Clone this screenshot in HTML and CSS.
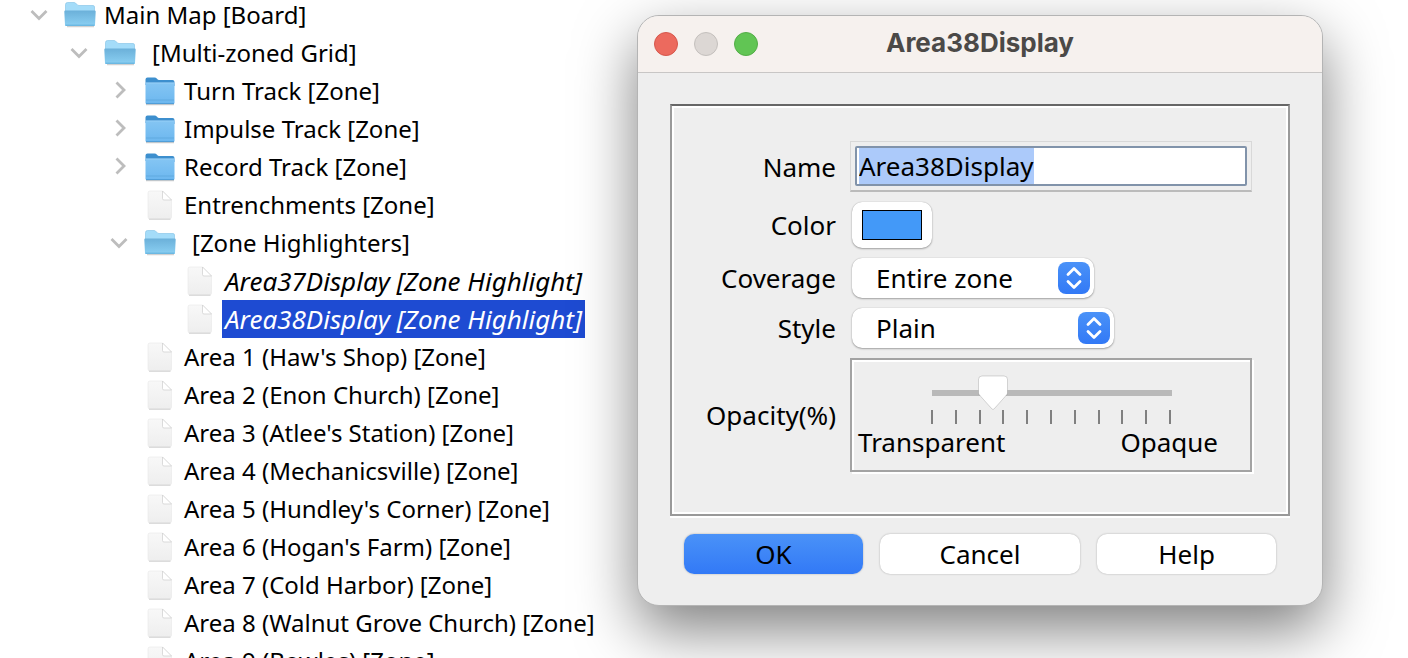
FILE: index.html
```
<!DOCTYPE html>
<html lang="en">
<head>
    <meta charset="UTF-8">
    <meta name="viewport" content="width=device-width, initial-scale=1.0">
    <title>Area38Display</title>
    <link rel="stylesheet" href="styles.css">
</head>
<body>
    <!-- Shared icons -->
    <svg class="sprite" aria-hidden="true">
        <defs>
            <linearGradient id="openFront" x1="0" y1="0" x2="0" y2="1">
                <stop offset="0" stop-color="#6bb0d9"/>
                <stop offset="1" stop-color="#8bd0f3"/>
            </linearGradient>
            <linearGradient id="closedFront" x1="0" y1="0" x2="0" y2="1">
                <stop offset="0" stop-color="#84c5f3"/>
                <stop offset="1" stop-color="#6cb7ef"/>
            </linearGradient>
            <linearGradient id="paper" x1="0" y1="0" x2="0" y2="1">
                <stop offset="0" stop-color="#f8f8f8"/>
                <stop offset="1" stop-color="#eeeeee"/>
            </linearGradient>
        </defs>
        <symbol id="folder-open" viewBox="0 0 32 32">
            <path d="M3 27.500h27" stroke="#000" stroke-opacity=".18" stroke-width="1.5"/>
            <path d="M1.500 24V5.500q0-2 2-2h6.500q1.500 0 2.500 1.500T15 6.500h14q1.500 0 1.500 1.500V24z" fill="#a4dcf9" stroke="#7fc0e4" stroke-width=".6"/>
            <path d="M.3 12.500q0-1 1-1h29.400q1 0 1 1L31 26q0 1-1 1H2q-1 0-1-1z" fill="url(#openFront)"/>
            <path d="M1.500 26.200h29" stroke="#5eaedb" stroke-width="1"/>
        </symbol>
        <symbol id="folder-closed" viewBox="0 0 32 32">
            <path d="M2 29.500h28" stroke="#000" stroke-opacity=".2" stroke-width="1.500"/>
            <path d="M1.500 10V4.500q0-2 2-2h7q1.500 0 2.500 1.200T15 5h13.500q2 0 2 2v4z" fill="#3d8fce"/>
            <path d="M1.500 9q0-1 1-1h27q1 0 1 1v18.500q0 1.500-1.500 1.500H3q-1.500 0-1.500-1.500z" fill="url(#closedFront)"/>
            <path d="M1.500 7.800h29" stroke="#b3e0ff" stroke-width=".7"/>
            <path d="M2 25h28" stroke="#5aa3da" stroke-width=".7"/>
            <path d="M2 28.600h28" stroke="#4c97d2" stroke-width=".9"/>
        </symbol>
        <symbol id="document" viewBox="0 0 32 32">
            <path d="M4 4q0-2 2-2h12.500l9 9V28q0 2-2 2H6q-2 0-2-2z" fill="url(#paper)" stroke="#e8e8e8" stroke-width=".6"/>
            <path d="M5 30.200h21.500" stroke="#cfcfcf" stroke-width="1"/>
            <path d="M18.500 2v7.500q0 1.500 1.500 1.500h7.500z" fill="#fff" stroke="#cdcdcd" stroke-width=".7"/>
        </symbol>
        <symbol id="chevron-down" viewBox="0 0 30 30">
            <path d="M7.500 11l7.500 7.500 7.500-7.500" fill="none" stroke="#bdbdbd" stroke-width="2.800"/>
        </symbol>
        <symbol id="chevron-right" viewBox="0 0 30 30">
            <path d="M12.500 6.500l7.500 7.500-7.500 7.500" fill="none" stroke="#bdbdbd" stroke-width="2.800"/>
        </symbol>
        <symbol id="up-down" viewBox="0 0 32 32">
            <path d="M10 12.500l6-6 6 6M10 19.500l6 6 6-6" fill="none" stroke="#fff" stroke-width="2.800" stroke-linecap="round" stroke-linejoin="round"/>
        </symbol>
    </svg>

    <main class="desktop">
        <ul class="tree">
            <li>
                <div class="row root"><button class="toggle" aria-label="Collapse"><svg><use href="#chevron-down"/></svg></button><svg class="icon"><use href="#folder-open"/></svg><span class="name">Main Map [Board]</span></div>
                <ul>
                    <li>
                        <div class="row"><button class="toggle" aria-label="Collapse"><svg><use href="#chevron-down"/></svg></button><svg class="icon"><use href="#folder-open"/></svg><span class="name unnamed">[Multi-zoned Grid]</span></div>
                        <ul>
                            <li><div class="row"><button class="toggle" aria-label="Expand"><svg><use href="#chevron-right"/></svg></button><svg class="icon"><use href="#folder-closed"/></svg><span class="name">Turn Track [Zone]</span></div></li>
                            <li><div class="row"><button class="toggle" aria-label="Expand"><svg><use href="#chevron-right"/></svg></button><svg class="icon"><use href="#folder-closed"/></svg><span class="name">Impulse Track [Zone]</span></div></li>
                            <li><div class="row"><button class="toggle" aria-label="Expand"><svg><use href="#chevron-right"/></svg></button><svg class="icon"><use href="#folder-closed"/></svg><span class="name">Record Track [Zone]</span></div></li>
                            <li><div class="row leaf"><svg class="icon"><use href="#document"/></svg><span class="name">Entrenchments [Zone]</span></div></li>
                            <li>
                                <div class="row"><button class="toggle" aria-label="Collapse"><svg><use href="#chevron-down"/></svg></button><svg class="icon"><use href="#folder-open"/></svg><span class="name unnamed">[Zone Highlighters]</span></div>
                                <ul>
                                    <li><div class="row leaf"><svg class="icon"><use href="#document"/></svg><span class="name highlight">Area37Display [Zone Highlight]</span></div></li>
                                    <li><div class="row leaf"><svg class="icon"><use href="#document"/></svg><span class="name highlight selected">Area38Display [Zone Highlight]</span></div></li>
                                </ul>
                            </li>
                            <li><div class="row leaf"><svg class="icon"><use href="#document"/></svg><span class="name">Area 1 (Haw's Shop) [Zone]</span></div></li>
                            <li><div class="row leaf"><svg class="icon"><use href="#document"/></svg><span class="name">Area 2 (Enon Church) [Zone]</span></div></li>
                            <li><div class="row leaf"><svg class="icon"><use href="#document"/></svg><span class="name">Area 3 (Atlee's Station) [Zone]</span></div></li>
                            <li><div class="row leaf"><svg class="icon"><use href="#document"/></svg><span class="name">Area 4 (Mechanicsville) [Zone]</span></div></li>
                            <li><div class="row leaf"><svg class="icon"><use href="#document"/></svg><span class="name">Area 5 (Hundley's Corner) [Zone]</span></div></li>
                            <li><div class="row leaf"><svg class="icon"><use href="#document"/></svg><span class="name">Area 6 (Hogan's Farm) [Zone]</span></div></li>
                            <li><div class="row leaf"><svg class="icon"><use href="#document"/></svg><span class="name">Area 7 (Cold Harbor) [Zone]</span></div></li>
                            <li><div class="row leaf"><svg class="icon"><use href="#document"/></svg><span class="name">Area 8 (Walnut Grove Church) [Zone]</span></div></li>
                            <li><div class="row leaf"><svg class="icon"><use href="#document"/></svg><span class="name">Area 9 (Bowles) [Zone]</span></div></li>
                        </ul>
                    </li>
                </ul>
            </li>
        </ul>

        <section class="dialog" role="dialog" aria-labelledby="dialogTitle">
            <header class="titlebar">
                <div class="lights">
                    <button class="light close" aria-label="Close"></button>
                    <button class="light minimize" aria-label="Minimize" disabled></button>
                    <button class="light zoom" aria-label="Zoom"></button>
                </div>
                <h1 id="dialogTitle">Area38Display</h1>
            </header>

            <form class="content">
                <div class="panel">
                    <label for="name">Name</label>
                    <div class="text-frame">
                        <input type="text" id="name" value="Area38Display">
                    </div>

                    <label for="color">Color</label>
                    <button type="button" class="color-button" id="color"><span class="swatch"></span></button>

                    <label for="coverage">Coverage</label>
                    <div class="combo">
                        <select id="coverage">
                            <option>Entire zone</option>
                        </select>
                        <svg><use href="#up-down"/></svg>
                    </div>

                    <label for="style">Style</label>
                    <div class="combo wide">
                        <select id="style">
                            <option>Plain</option>
                        </select>
                        <svg><use href="#up-down"/></svg>
                    </div>

                    <label for="opacity">Opacity(%)</label>
                    <div class="slider">
                        <input type="range" id="opacity" min="0" max="100" value="22">
                        <div class="ticks"><i></i><i></i><i></i><i></i><i></i><i></i><i></i><i></i><i></i><i></i><i></i></div>
                        <div class="legend"><span>Transparent</span><span>Opaque</span></div>
                    </div>
                </div>

                <div class="actions">
                    <button type="button" class="button primary">OK</button>
                    <button type="button" class="button cancel">Cancel</button>
                    <button type="button" class="button">Help</button>
                </div>
            </form>
        </section>
    </main>

    <script>
        // Select the whole name when the dialog opens
        document.getElementById('name').select();
    </script>
</body>
</html>
```
FILE: styles.css
```
* {
    margin: 0;
    padding: 0;
    box-sizing: border-box;
}

body {
    background: #fff;
    color: #000;
    font-family: 'Noto Sans', 'Open Sans', sans-serif;
    font-size: 24px;
    overflow: hidden;
}

button,
input,
select {
    font: inherit;
    color: inherit;
    border: none;
    outline: none;
}

.sprite {
    position: absolute;
    width: 0;
    height: 0;
}

.desktop {
    display: flex;
    align-items: flex-start;
    height: 100vh;
    overflow: hidden;
}

/* Tree */
.tree {
    flex: 0 0 637px;
    padding-left: 24px;
}

.tree ul {
    padding-left: 40px;
}

.tree li {
    list-style: none;
}

.row {
    display: flex;
    align-items: center;
    height: 38px;
    white-space: nowrap;
}

.root {
    height: 30px;
    margin-bottom: 4px;
}

.toggle {
    width: 30px;
    height: 30px;
    margin-right: 10px;
    background: none;
}

.toggle svg {
    display: block;
    width: 30px;
    height: 30px;
}

.leaf {
    padding-left: 40px;
}

.icon {
    flex: none;
    width: 32px;
    height: 32px;
    margin-right: 6px;
}

.name {
    padding: 0 2px;
    line-height: 38px;
}

.root .name {
    line-height: 30px;
}

.unnamed {
    padding-left: 10px;
}

.highlight {
    padding: 0 3px;
    font-size: 26px;
    font-style: italic;
}

.selected {
    background: #1e4bd2;
    color: #fff;
}

/* Dialog */
.dialog {
    position: relative;
    flex: 1;
    margin: 15px 85px 0 0;
    background: #eee;
    border: 1px solid #b4b4b4;
    border-radius: 22px;
    box-shadow: 0 24px 60px rgba(0, 0, 0, 0.5);
}

.titlebar {
    display: grid;
    grid-template-columns: 1fr auto 1fr;
    align-items: center;
    height: 57px;
    padding: 0 16px;
    background: #f6f1ee;
    border-bottom: 1px solid #c8c6c5;
    border-radius: 21px 21px 0 0;
}

.titlebar h1 {
    padding-bottom: 2px;
    font-family: Inter, sans-serif;
    font-size: 26px;
    font-weight: 700;
    line-height: 32px;
    color: #4b4947;
}

.lights {
    display: flex;
    gap: 16px;
}

.light {
    width: 24px;
    height: 24px;
    border: 1px solid #d6574c;
    border-radius: 50%;
    background: #ec6a5e;
}

.minimize {
    background: #dcd7d4;
    border-color: #c4c0bd;
}

.zoom {
    background: #61c554;
    border-color: #53ad47;
}

.content {
    padding: 31px 32px;
    font-size: 26px;
    line-height: 36px;
}

.panel {
    display: grid;
    grid-template-columns: 164px 1fr;
    column-gap: 14px;
    row-gap: 10px;
    align-items: center;
    padding: 35px 36px 42px 0;
    border: 2px solid #999;
    border-top-color: #666;
    box-shadow: inset 0 0 0 2px #fff, 0 2px 0 #fff;
}

.panel label {
    text-align: right;
}

.text-frame {
    padding: 4px;
    border: 1px solid #d8d8d8;
    border-bottom: 2px solid #bbb;
}

.text-frame input {
    display: block;
    width: 100%;
    height: 40px;
    padding: 0 2px;
    background: #fff;
    border: 2px solid #8193aa;
    border-radius: 2px;
}

.text-frame input::selection {
    background: #accafa;
    color: #000;
}

.color-button {
    justify-self: start;
    display: flex;
    align-items: center;
    justify-content: center;
    width: 80px;
    height: 46px;
    margin-left: 2px;
    background: #fff;
    border-radius: 10px;
    box-shadow: 0 0 1px rgba(0, 0, 0, 0.3), 0 1px 2px rgba(0, 0, 0, 0.3);
}

.swatch {
    width: 60px;
    height: 30px;
    background: #4399f8;
    border: 1px solid #000;
}

.combo {
    display: grid;
    grid-template-columns: 1fr 32px;
    align-items: center;
    width: 242px;
    margin-left: 2px;
}

.combo.wide {
    width: 262px;
}

.combo select {
    grid-area: 1 / 1 / 2 / 3;
    height: 40px;
    padding: 0 48px 0 24px;
    appearance: none;
    background: #fff;
    border-radius: 10px;
    box-shadow: 0 0 1px rgba(0, 0, 0, 0.3), 0 1px 2px rgba(0, 0, 0, 0.3);
}

.combo svg {
    grid-area: 1 / 2;
    width: 32px;
    height: 32px;
    margin-left: -4px;
    border-radius: 8px;
    background: linear-gradient(#4a92f8, #3279f6);
    pointer-events: none;
}

.slider {
    padding: 16px 32px 10px 6px;
    border: 2px solid #a3a3a3;
    box-shadow: inset 2px 2px 0 #fff, 2px 2px 0 #fff;
}

.slider input {
    display: block;
    width: 240px;
    height: 34px;
    margin-left: 74px;
    appearance: none;
    background: linear-gradient(#b9b9b9, #b9b9b9) 0 14px / 100% 6px no-repeat;
}

.slider input::-webkit-slider-thumb {
    appearance: none;
    width: 30px;
    height: 36px;
    background: url("data:image/svg+xml,%3Csvg xmlns='http://www.w3.org/2000/svg' viewBox='0 0 30 36'%3E%3Cpath d='M4 1h22q3.500 0 3.500 3.500V18q0 1-1 2L16 34q-1 1-2 0L1.500 20q-1-1-1-2V4.500Q.5 1 4 1z' fill='%23fff' stroke='%23000' stroke-opacity='.15'/%3E%3C/svg%3E") center / 30px 36px no-repeat;
}

.ticks {
    display: flex;
    justify-content: space-between;
    width: 240px;
    margin-left: 73px;
}

.ticks i {
    width: 2px;
    height: 14px;
    background: #808080;
}

.legend {
    display: flex;
    justify-content: space-between;
}

/* Dialog buttons */
.actions {
    display: flex;
    gap: 17px;
    padding: 18px 14px 0;
}

.button {
    flex: 179;
    height: 40px;
    background: #fff;
    border-radius: 10px;
    box-shadow: 0 0 2px rgba(0, 0, 0, 0.3);
}

.cancel {
    flex: 201;
}

.primary {
    background: linear-gradient(#4a92f8, #3279f6);
}
```
